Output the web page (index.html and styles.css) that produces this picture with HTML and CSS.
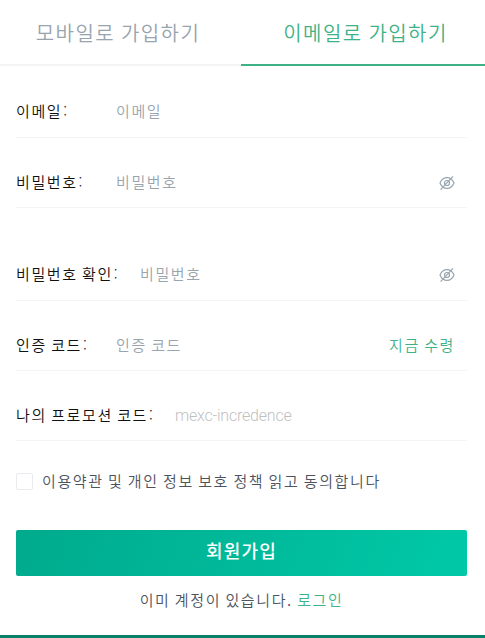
FILE: index.html
```
<!DOCTYPE html>
<html lang="ko">
<head>
	<meta charset="utf-8">
	<title>회원가입</title>
	<link rel="stylesheet" href="styles.css">
</head>
<body>
	<div class="tabs">
		<a class="tab">모바일로 가입하기</a>
		<a class="tab active">이메일로 가입하기</a>
	</div>
	<form class="signup">
		<div class="row">
			<label for="email">이메일<i>:</i></label>
			<input id="email" type="text" placeholder="이메일">
		</div>
		<div class="row">
			<label for="pwd">비밀번호<i>:</i></label>
			<input id="pwd" type="password" placeholder="비밀번호">
			<svg class="eye" viewBox="0 0 16 16">
				<path d="M1 8C2.6 4.2 5 2.6 8 2.6S13.4 4.2 15 8C13.4 11.8 11 13.4 8 13.4S2.6 11.8 1 8Z"/>
				<circle cx="8" cy="8" r="2.5"/>
				<path d="M1.6 14.6L14 1.4"/>
			</svg>
		</div>
		<div class="row confirm">
			<label for="pwd2">비밀번호 확인<i>:</i></label>
			<input id="pwd2" type="password" placeholder="비밀번호">
			<svg class="eye" viewBox="0 0 16 16">
				<path d="M1 8C2.6 4.2 5 2.6 8 2.6S13.4 4.2 15 8C13.4 11.8 11 13.4 8 13.4S2.6 11.8 1 8Z"/>
				<circle cx="8" cy="8" r="2.5"/>
				<path d="M1.6 14.6L14 1.4"/>
			</svg>
		</div>
		<div class="row">
			<label for="code">인증 코드<i>:</i></label>
			<input id="code" type="text" placeholder="인증 코드">
			<a class="get_code">지금 수령</a>
		</div>
		<div class="row promo">
			<label for="promo">나의 프로모션 코드<i>:</i></label>
			<input id="promo" type="text" placeholder="mexc-incredence">
		</div>
		<div class="agree">
			<span class="checkbox"></span>
			<span class="terms">이용약관 및 개인 정보 보호 정책 읽고 동의합니다</span>
		</div>
		<button class="btn_submit" type="button">회원가입</button>
		<p class="login">이미 계정이 있습니다. <a>로그인</a></p>
	</form>
	<div class="footer_bar"></div>
</body>
</html>
```
FILE: styles.css
```
* {
	box-sizing: border-box;
}
body {
	margin: 0;
	height: 638px;
	overflow: hidden;
	display: flex;
	flex-direction: column;
	background: #fff;
	font-family: "Noto Sans CJK KR", sans-serif;
	font-weight: 350;
	font-size: 15px;
	letter-spacing: 1.6px;
	word-spacing: -1.4px;
	color: #4b535e;
}

/* tabs */
.tabs {
	display: flex;
	height: 66px;
}
.tab {
	width: 241px;
	padding-right: 5px;
	line-height: 65px;
	font-size: 20px;
	letter-spacing: 1.4px;
	word-spacing: -1px;
	text-align: center;
	white-space: nowrap;
	color: #98a4ae;
	border-bottom: 2px solid #f3f4f4;
}
.tab.active {
	flex: 1;
	padding: 0 0 0 5px;
	color: #3eb287;
	border-color: #3eb287;
}

/* form rows */
.signup {
	flex: 1;
	padding: 0 18px 0 16px;
}
.row {
	display: flex;
	align-items: center;
	height: 70px;
	padding: 19px 13px 0 0;
	border-bottom: 1px solid #f3f4f5;
}
.row:first-child {
	height: 72px;
}
.row.confirm {
	height: 93px;
	padding-top: 41px;
}
label {
	min-width: 100px;
	padding-bottom: 2px;
	white-space: nowrap;
	color: #111;
}
label i {
	font-style: normal;
	font-weight: 300;
	margin-left: 1px;
}
.confirm label {
	min-width: 124px;
}
.promo label {
	min-width: 159px;
}
input {
	flex: 1;
	min-width: 0;
	padding: 0 0 2px;
	border: 0;
	outline: 0;
	background: none;
	font: inherit;
	letter-spacing: inherit;
	word-spacing: inherit;
}
input::placeholder {
	color: #98a4ae;
}
.promo input {
	padding: 0;
	font-family: Roboto, sans-serif;
	font-size: 16px;
	letter-spacing: -0.2px;
}
.promo input::placeholder {
	color: #bfbfbf;
}
.eye {
	width: 16px;
	height: 16px;
	margin: 1px -0.5px 0 0;
	fill: none;
	stroke: #98a4ae;
	stroke-width: 1.2;
}
.get_code {
	margin-right: -1px;
	padding-bottom: 2px;
	color: #3eb287;
	white-space: nowrap;
}

.agree {
	display: flex;
	align-items: center;
	gap: 9px;
	height: 17px;
	margin-top: 32px;
	white-space: nowrap;
}
.terms {
	padding-bottom: 2px;
}
.checkbox {
	width: 17px;
	height: 17px;
	border: 1px solid #e8eaed;
	border-radius: 2px;
}
.btn_submit {
	display: block;
	width: 100%;
	height: 46px;
	margin-top: 40px;
	padding: 0 0 7px;
	border: 0;
	border-radius: 2px;
	background: linear-gradient(110deg, #00aa8d, #00c9a7);
	color: #fff;
	font: 500 18px "Noto Sans CJK KR", sans-serif;
	letter-spacing: 1.2px;
}
.login {
	margin: 12px 0 0;
	line-height: 24px;
	text-align: center;
}
.login a {
	color: #3eb287;
}
.footer_bar {
	height: 3px;
	background: #0a8068;
}
```
